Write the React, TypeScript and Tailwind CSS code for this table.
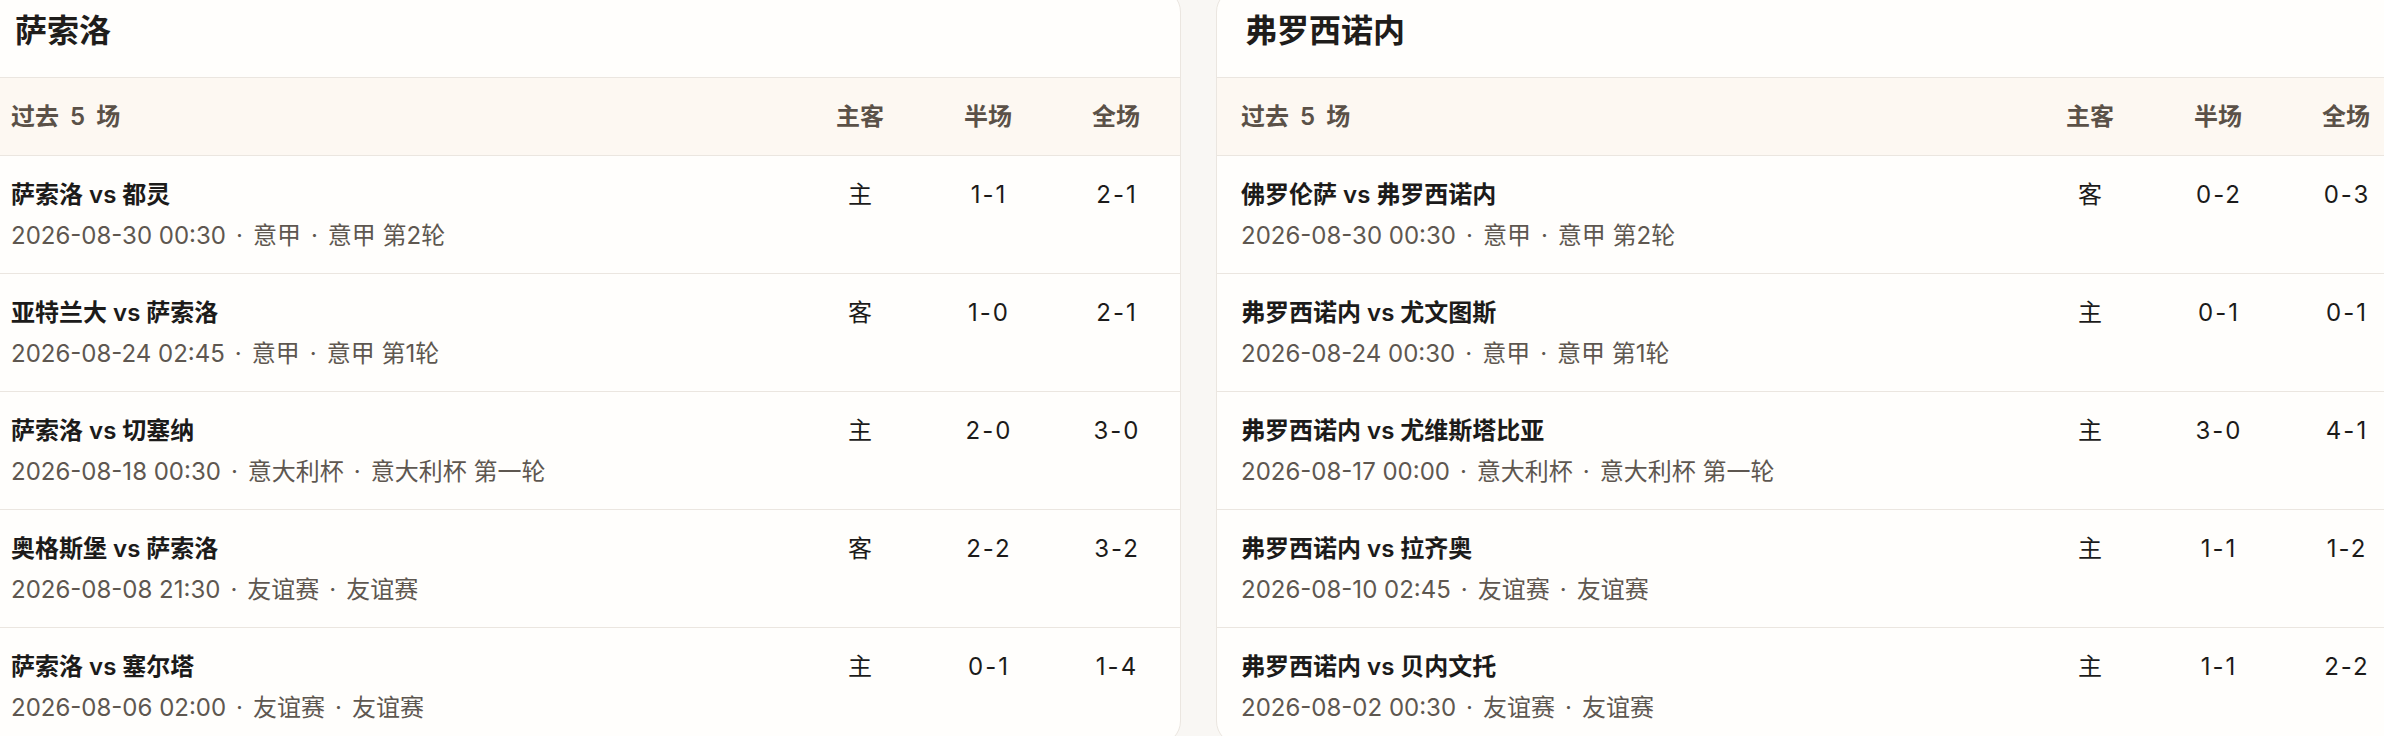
type Match = {
  title: string;
  time: string;
  comp: string;
  round: string;
  side: string;
  half: string;
  full: string;
};

const sassuolo: Match[] = [
  { title: "萨索洛 vs 都灵", time: "2026-08-30 00:30", comp: "意甲", round: "意甲 第2轮", side: "主", half: "1-1", full: "2-1" },
  { title: "亚特兰大 vs 萨索洛", time: "2026-08-24 02:45", comp: "意甲", round: "意甲 第1轮", side: "客", half: "1-0", full: "2-1" },
  { title: "萨索洛 vs 切塞纳", time: "2026-08-18 00:30", comp: "意大利杯", round: "意大利杯 第一轮", side: "主", half: "2-0", full: "3-0" },
  { title: "奥格斯堡 vs 萨索洛", time: "2026-08-08 21:30", comp: "友谊赛", round: "友谊赛", side: "客", half: "2-2", full: "3-2" },
  { title: "萨索洛 vs 塞尔塔", time: "2026-08-06 02:00", comp: "友谊赛", round: "友谊赛", side: "主", half: "0-1", full: "1-4" },
];

const frosinone: Match[] = [
  { title: "佛罗伦萨 vs 弗罗西诺内", time: "2026-08-30 00:30", comp: "意甲", round: "意甲 第2轮", side: "客", half: "0-2", full: "0-3" },
  { title: "弗罗西诺内 vs 尤文图斯", time: "2026-08-24 00:30", comp: "意甲", round: "意甲 第1轮", side: "主", half: "0-1", full: "0-1" },
  { title: "弗罗西诺内 vs 尤维斯塔比亚", time: "2026-08-17 00:00", comp: "意大利杯", round: "意大利杯 第一轮", side: "主", half: "3-0", full: "4-1" },
  { title: "弗罗西诺内 vs 拉齐奥", time: "2026-08-10 02:45", comp: "友谊赛", round: "友谊赛", side: "主", half: "1-1", full: "1-2" },
  { title: "弗罗西诺内 vs 贝内文托", time: "2026-08-02 00:30", comp: "友谊赛", round: "友谊赛", side: "主", half: "1-1", full: "2-2" },
];

function Dot() {
  return <span className="inline-block mx-[10px]">·</span>;
}

function TeamCard({ team, matches }: { team: string; matches: Match[] }) {
  return (
    <div className="w-[1195px] shrink-0 h-[757px] bg-[#fffefc] border border-[#ebe6e0] rounded-3xl overflow-hidden">
      <h2 className="px-[28px] pt-[22px] pb-[26px] text-[32px] leading-[40px] font-bold text-[#1f1d1b]">
        {team}
      </h2>

      <div className="grid grid-cols-[1fr_128px_128px_128px] items-center h-[79px] pl-6 bg-[#fdf8f2] border-y border-[#ebe6e0] text-[24px] font-semibold text-[#5b5148]">
        <span className="[word-spacing:5px]">过去 5 场</span>
        <span className="text-center">主客</span>
        <span className="text-center">半场</span>
        <span className="text-center">全场</span>
      </div>

      {matches.map((m, idx) => (
        <div
          key={idx}
          className={
            "grid grid-cols-[1fr_128px_128px_128px] items-start pl-6 pt-[21px] pb-[20px] " +
            (idx < matches.length - 1 ? "border-b border-[#ebe6e0]" : "")
          }
        >
          <div>
            <div className="text-[24px] leading-[36px] font-semibold text-[#1c1b1a]">{m.title}</div>
            <div className="mt-[6px] text-[24px] leading-[34px] text-[#5e5750]">
              {m.time}
              <Dot />
              {m.comp}
              <Dot />
              {m.round}
            </div>
          </div>
          <span className="text-center text-[24px] leading-[36px] text-[#1c1b1a]">{m.side}</span>
          <span className="text-center text-[24px] leading-[36px] text-[#1c1b1a] tracking-[2px] pl-[2px]">{m.half}</span>
          <span className="text-center text-[24px] leading-[36px] text-[#1c1b1a] tracking-[2px] pl-[2px]">{m.full}</span>
        </div>
      ))}
    </div>
  );
}

export default function App() {
  return (
    <div
      className="w-[2384px] h-[736px] overflow-hidden bg-[#f9f7f4]"
      style={{ fontFamily: 'Inter, "Noto Sans CJK SC", sans-serif' }}
    >
      <div className="flex gap-[35px] ml-[-14px] mt-[-12px]">
        <TeamCard team="萨索洛" matches={sassuolo} />
        <TeamCard team="弗罗西诺内" matches={frosinone} />
      </div>
    </div>
  );
}
